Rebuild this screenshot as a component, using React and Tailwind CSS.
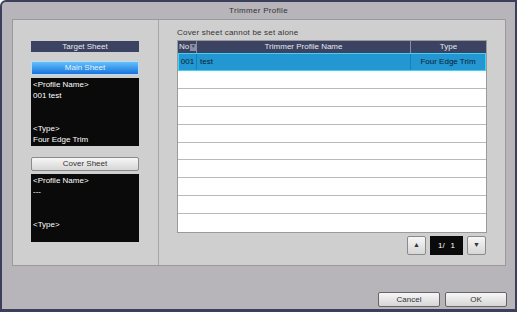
import React from 'react';

const rows = Array.from({ length: 9 });

const BlackBox = ({ name, type }) => (
  <div className="h-[68px] bg-[#0a0a0a] text-white px-[2px] pt-[1px] leading-[11px] flex flex-col">
    <div>&lt;Profile Name&gt;</div>
    <div>{name}</div>
    <div className="mt-auto">&lt;Type&gt;</div>
    <div className="h-[12px]">{type}</div>
  </div>
);

const GrayButton = ({ children, className = '' }) => (
  <div
    className={`flex items-center justify-center border border-[#8a8a8a] rounded-[2px] bg-gradient-to-b from-[#f6f6f6] to-[#d6d6d6] text-[#333] ${className}`}
  >
    {children}
  </div>
);

export default function App() {
  return (
    <div
      className="w-[517px] h-[312px] bg-[#b7b5b9] border-2 border-b-[3px] border-[#3b3f5c] rounded-tl-[6px] flex flex-col text-[8px]"
      style={{ fontFamily: '"Liberation Sans", Arial, sans-serif' }}
    >
      <div className="h-[17px] flex items-center justify-center text-[#333] tracking-[0.3px]">
        Trimmer Profile
      </div>

      <div className="ml-[10px] mr-[9px] h-[247px] border border-[#999] bg-[#cfcfcf] flex">
        {/* left: target sheet */}
        <div className="w-[146px] border-r border-[#a6a6a6] pl-[18px] pr-[19px] pt-[21px]">
          <div className="h-[11px] bg-[#3b4262] text-[#e8e8e8] flex items-center justify-center">
            Target Sheet
          </div>
          <div className="mt-[9px] h-[14px] border border-[#b9dcf5] bg-gradient-to-b from-[#62c0fb] to-[#1773dd] text-[#e6f3ff] flex items-center justify-center">
            Main Sheet
          </div>
          <div className="mt-[3px]">
            <BlackBox name="001 test" type="Four Edge Trim" />
          </div>
          <GrayButton className="mt-[11px] h-[14px]">Cover Sheet</GrayButton>
          <div className="mt-[3px]">
            <BlackBox name="---" type="" />
          </div>
        </div>

        {/* right: profile list */}
        <div className="flex-1 pl-[18px] pt-[6px]">
          <div className="h-[14px] flex items-center text-[#333] tracking-[0.2px]">
            Cover sheet cannot be set alone
          </div>
          <div className="w-[310px] h-[193px] bg-white border border-[#9a9a9a] flex flex-col">
            <div className="h-[12px] bg-[#3b4262] text-[#e8e8e8] grid grid-cols-[19px_214px_1fr]">
              <div className="flex items-center gap-[1px] pl-[1px] border-r border-[#8a8fa6]">
                No
                <span className="w-[7px] h-[7px] bg-[#8a8fa6] flex items-center justify-center text-[5px] text-[#3b4262]">▼</span>
              </div>
              <div className="flex items-center justify-center border-r border-[#8a8fa6]">Trimmer Profile Name</div>
              <div className="flex items-center justify-center">Type</div>
            </div>
            <div className="h-[18px] bg-[#2297d2] border border-[#3fd0f5] text-[#0d1b30] grid grid-cols-[18px_214px_1fr]">
              <div className="flex items-center justify-center border-r border-[#1a7fb8]">001</div>
              <div className="flex items-center pl-[3px] border-r border-[#1a7fb8]">test</div>
              <div className="flex items-center justify-center">Four Edge Trim</div>
            </div>
            {rows.map((_, i) => (
              <div key={i} className="h-[18px] border-b border-[#b9b9b9] last:border-b-0" />
            ))}
          </div>
          <div className="w-[310px] mt-[3px] flex justify-end items-center gap-[4px] pr-[1px]">
            <GrayButton className="w-[19px] h-[19px] text-[7px] text-[#111]">▲</GrayButton>
            <div className="w-[33px] h-[19px] bg-[#0a0a0a] text-white flex items-center justify-center gap-[6px]">
              <span>1/</span>
              <span>1</span>
            </div>
            <GrayButton className="w-[19px] h-[19px] text-[7px] text-[#111]">▼</GrayButton>
          </div>
        </div>
      </div>

      <div className="flex-1 flex items-end justify-end gap-[5px] pr-[8px] pb-[2px]">
        <GrayButton className="w-[62px] h-[15px] border-[#666] from-[#e4e4e4] to-[#b9b9b9]">Cancel</GrayButton>
        <GrayButton className="w-[62px] h-[15px] border-[#666] from-[#e4e4e4] to-[#b9b9b9]">OK</GrayButton>
      </div>
    </div>
  );
}
